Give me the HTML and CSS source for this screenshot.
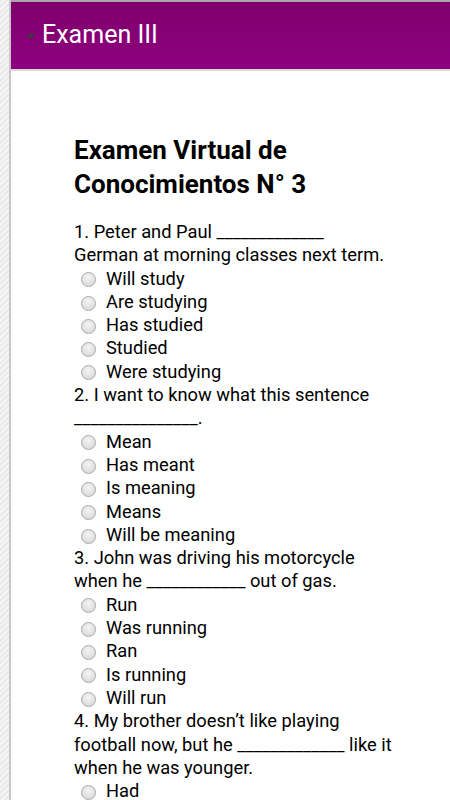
FILE: index.html
```html
<!DOCTYPE html>
<html>
<head>
<meta charset="utf-8">
<link rel="stylesheet" href="styles.css">
</head>
<body>
<div class="page">
  <div class="strip"></div>
  <div class="main">
    <div class="header">
      <span class="caret"></span>
      <span class="header-title">Examen III</span>
    </div>
    <div class="content">
      <h1 class="title">Examen Virtual de Conocimientos N° 3</h1>
      <div class="question">
        <p class="q">1. Peter and Paul _____________<br>German at morning classes next term.</p>
        <label class="opt"><span class="radio"></span>Will study</label>
        <label class="opt"><span class="radio"></span>Are studying</label>
        <label class="opt"><span class="radio"></span>Has studied</label>
        <label class="opt"><span class="radio"></span>Studied</label>
        <label class="opt"><span class="radio"></span>Were studying</label>
      </div>
      <div class="question">
        <p class="q">2. I want to know what this sentence _______________.</p>
        <label class="opt"><span class="radio"></span>Mean</label>
        <label class="opt"><span class="radio"></span>Has meant</label>
        <label class="opt"><span class="radio"></span>Is meaning</label>
        <label class="opt"><span class="radio"></span>Means</label>
        <label class="opt"><span class="radio"></span>Will be meaning</label>
      </div>
      <div class="question">
        <p class="q">3. John was driving his motorcycle when he ____________ out of gas.</p>
        <label class="opt"><span class="radio"></span>Run</label>
        <label class="opt"><span class="radio"></span>Was running</label>
        <label class="opt"><span class="radio"></span>Ran</label>
        <label class="opt"><span class="radio"></span>Is running</label>
        <label class="opt"><span class="radio"></span>Will run</label>
      </div>
      <div class="question">
        <p class="q">4. My brother doesn’t like playing football now, but he _____________ like it when he was younger.</p>
        <label class="opt"><span class="radio"></span>Had</label>
      </div>
    </div>
  </div>
</div>
</body>
</html>
```
FILE: styles.css
```css
html, body {
  margin: 0;
  padding: 0;
  background: #fff;
  overflow: hidden;
}
body {
  font-family: Roboto, "Liberation Sans", sans-serif;
  color: #000;
}
.page {
  display: flex;
  height: 800px;
}
.strip {
  width: 9px;
  flex: none;
  border-right: 2px solid #c9c9c9;
  background: repeating-linear-gradient(135deg, #e9e9e9 0 2px, #f6f6f6 2px 4px);
}
.main {
  flex: 1;
  min-width: 0;
  border-top: 2px solid #a8a8a8;
}
.header {
  height: 69px;
  box-sizing: border-box;
  border-bottom: 2px solid #dcdcdc;
  background: linear-gradient(#7e006c, #8f0080);
  display: flex;
  align-items: center;
  padding-left: 16px;
  padding-bottom: 2px;
}
.caret {
  width: 0;
  height: 0;
  border-left: 4px solid transparent;
  border-right: 4px solid transparent;
  border-top: 5px solid #3a3a3a;
  margin-right: 7px;
  margin-top: 3px;
}
.header-title {
  color: #fff;
  font-size: 25px;
}
.content {
  padding: 62px 54px 0 63px;
}
.title {
  margin: 0 0 19px;
  font-size: 26px;
  font-weight: bold;
  line-height: 34px;
}
.question {
  font-size: 18.3px;
  line-height: 23.3px;
}
.q {
  margin: 0;
}
.opt {
  display: flex;
  align-items: center;
  padding-left: 7px;
  height: 23.3px;
}
.radio {
  width: 13px;
  height: 13px;
  border-radius: 50%;
  border: 1px solid #a9a9a9;
  background: radial-gradient(circle at 50% 35%, #f4f4f4, #d4d4d4);
  margin-right: 10px;
  margin-top: 3px;
  flex: none;
}
```
